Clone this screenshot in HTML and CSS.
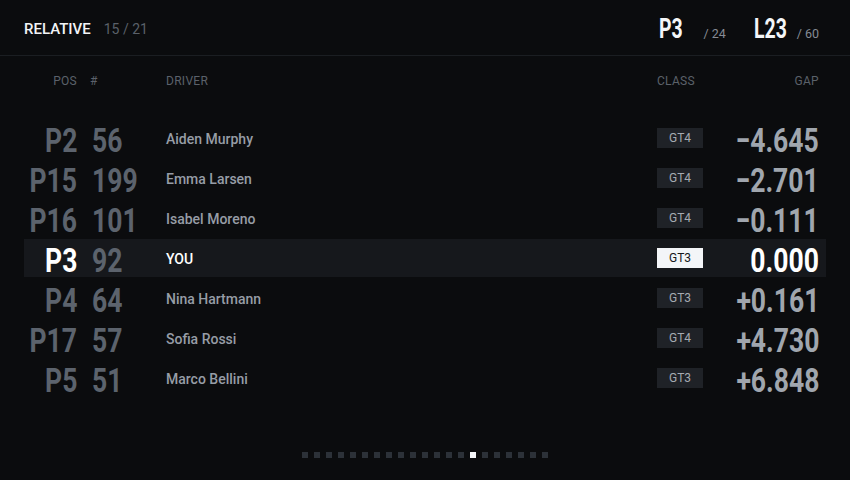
FILE: index.html
```html
<!DOCTYPE html>
<html>
<head>
<meta charset="utf-8">
<link rel="stylesheet" href="styles.css">
</head>
<body>
<div class="app">
  <header class="top">
    <div class="title"><span class="label">RELATIVE</span><span class="count">15 / 21</span></div>
    <div class="stats">
      <span class="big"><span class="sq">P3</span></span><span class="of">/ 24</span>
      <span class="big lap"><span class="sq">L23</span></span><span class="of">/ 60</span>
    </div>
  </header>
  <div class="table">
    <div class="grid colhead">
      <span class="c-pos">POS</span><span class="c-num">#</span><span class="c-drv">DRIVER</span><span class="c-cls">CLASS</span><span class="c-gap">GAP</span>
    </div>
    <div class="rows">
      <div class="grid row"><span class="c-pos num"><span class="sq">P2</span></span><span class="c-num num"><span class="sq">56</span></span><span class="c-drv name">Aiden Murphy</span><span class="c-cls"><span class="badge">GT4</span></span><span class="c-gap num gap"><span class="sq">−4.645</span></span></div>
      <div class="grid row"><span class="c-pos num"><span class="sq">P15</span></span><span class="c-num num"><span class="sq">199</span></span><span class="c-drv name">Emma Larsen</span><span class="c-cls"><span class="badge">GT4</span></span><span class="c-gap num gap"><span class="sq">−2.701</span></span></div>
      <div class="grid row"><span class="c-pos num"><span class="sq">P16</span></span><span class="c-num num"><span class="sq">101</span></span><span class="c-drv name">Isabel Moreno</span><span class="c-cls"><span class="badge">GT4</span></span><span class="c-gap num gap"><span class="sq">−0.111</span></span></div>
      <div class="grid row me"><span class="c-pos num"><span class="sq">P3</span></span><span class="c-num num"><span class="sq">92</span></span><span class="c-drv name">YOU</span><span class="c-cls"><span class="badge">GT3</span></span><span class="c-gap num gap"><span class="sq">0.000</span></span></div>
      <div class="grid row"><span class="c-pos num"><span class="sq">P4</span></span><span class="c-num num"><span class="sq">64</span></span><span class="c-drv name">Nina Hartmann</span><span class="c-cls"><span class="badge">GT3</span></span><span class="c-gap num gap"><span class="sq">+0.161</span></span></div>
      <div class="grid row"><span class="c-pos num"><span class="sq">P17</span></span><span class="c-num num"><span class="sq">57</span></span><span class="c-drv name">Sofia Rossi</span><span class="c-cls"><span class="badge">GT4</span></span><span class="c-gap num gap"><span class="sq">+4.730</span></span></div>
      <div class="grid row"><span class="c-pos num"><span class="sq">P5</span></span><span class="c-num num"><span class="sq">51</span></span><span class="c-drv name">Marco Bellini</span><span class="c-cls"><span class="badge">GT3</span></span><span class="c-gap num gap"><span class="sq">+6.848</span></span></div>
    </div>
  </div>
  <div class="dots">
    <i></i><i></i><i></i><i></i><i></i><i></i><i></i><i></i><i></i><i></i><i></i><i></i><i></i><i></i><i class="on"></i><i></i><i></i><i></i><i></i><i></i><i></i>
  </div>
</div>
</body>
</html>
```
FILE: styles.css
```css
html, body {
  margin: 0;
  padding: 0;
  background: #0b0c0e;
}
body {
  width: 850px;
  height: 480px;
  overflow: hidden;
  font-family: Roboto, "Liberation Sans", sans-serif;
  color: #9aa0a8;
}
.app {
  display: flex;
  flex-direction: column;
  height: 480px;
}
.top {
  height: 56px;
  border-bottom: 1px solid #1b1e22;
  display: flex;
  align-items: center;
  justify-content: space-between;
  padding: 2px 31px 0 24px;
  box-sizing: border-box;
}
.title {
  display: flex;
  align-items: baseline;
  gap: 13px;
}
.label {
  color: #f2f4f7;
  font-size: 15px;
  font-weight: 500;
}
.count {
  color: #5a6069;
  font-size: 14px;
}
.stats {
  display: flex;
  align-items: baseline;
}
.sq {
  display: inline-block;
  transform: translateY(1.5px) scaleX(0.78);
}
.big {
  font-family: Roboto, sans-serif;
  font-weight: 700;
  font-size: 27px;
  color: #f4f6f8;
  width: 24px;
  white-space: nowrap;
}
.big .sq {
  transform: scaleX(0.72);
  transform-origin: left center;
}
.lap {
  margin-left: 28px;
  width: 36px;
}
.of {
  color: #858b94;
  font-size: 12.5px;
  margin-left: 20px;
}
.of:last-child {
  margin-left: 7px;
}
.table {
  padding: 0 24px;
}
.grid {
  display: grid;
  grid-template-columns: 53px 89px 1fr 46px 116px;
  align-items: center;
  padding-right: 7px;
}
.c-pos {
  display: flex;
  justify-content: flex-end;
}
.c-num { padding-left: 15px; }
.c-gap {
  display: flex;
  justify-content: flex-end;
}
.c-pos .sq, .c-gap .sq { transform-origin: right center; }
.c-num .sq { transform-origin: left center; }
.colhead {
  height: 20px;
  margin-top: 15px;
  font-size: 12px;
  color: #5b616a;
  letter-spacing: 0.3px;
}
.colhead .c-num { padding-left: 13px; }
.rows {
  margin-top: 28px;
  display: flex;
  flex-direction: column;
  gap: 2px;
}
.row {
  height: 38px;
}
.num {
  font-family: Roboto, sans-serif;
  font-weight: 700;
  font-size: 34px;
  line-height: 38px;
  color: #5c636d;
  white-space: nowrap;
}
.gap {
  color: #a0a6ae;
}
.name {
  font-size: 14px;
  font-weight: 500;
  color: #979da6;
  padding-top: 1px;
}
.badge {
  display: flex;
  align-items: center;
  justify-content: center;
  width: 46px;
  height: 20px;
  background: #1f2227;
  color: #a6abb2;
  font-size: 12px;
}
.me {
  background: #16181c;
}
.me .c-pos, .me .gap {
  color: #ffffff;
}
.me .name {
  color: #ffffff;
}
.me .badge {
  background: #f3f5f8;
  color: #15171a;
}
.dots {
  margin-top: 55px;
  display: flex;
  justify-content: center;
  gap: 6px;
}
.dots i {
  width: 6px;
  height: 6px;
  background: #2c3138;
}
.dots i.on {
  background: #f3f5f8;
}
```
